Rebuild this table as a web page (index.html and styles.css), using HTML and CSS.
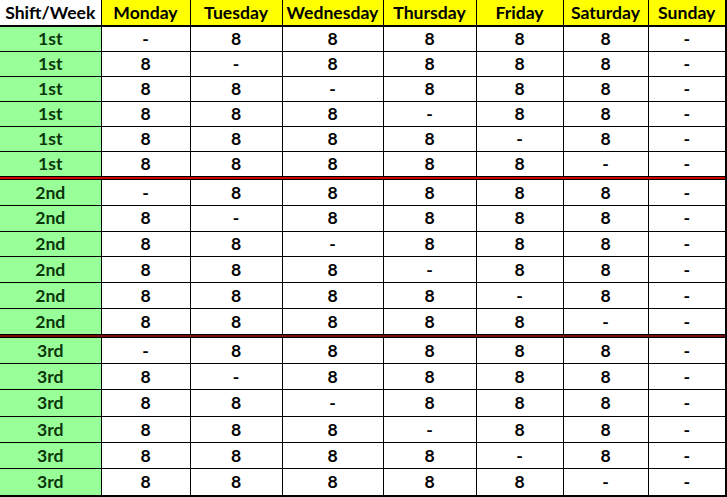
FILE: index.html
```html
<!DOCTYPE html>
<html>
<head>
<meta charset="utf-8">
<link rel="stylesheet" href="styles.css">
</head>
<body>
<table class="sched">
<colgroup>
<col class="c0"><col class="c1"><col class="c2"><col class="c3"><col class="c4"><col class="c5"><col class="c6"><col class="c7">
</colgroup>
<thead>
<tr class="head">
<th class="corner">Shift/Week</th><th>Monday</th><th>Tuesday</th><th>Wednesday</th><th>Thursday</th><th>Friday</th><th>Saturday</th><th>Sunday</th>
</tr>
</thead>
<tbody class="g1">
<tr><td class="lab">1st</td><td>-</td><td>8</td><td>8</td><td>8</td><td>8</td><td>8</td><td>-</td></tr>
<tr><td class="lab">1st</td><td>8</td><td>-</td><td>8</td><td>8</td><td>8</td><td>8</td><td>-</td></tr>
<tr><td class="lab">1st</td><td>8</td><td>8</td><td>-</td><td>8</td><td>8</td><td>8</td><td>-</td></tr>
<tr><td class="lab">1st</td><td>8</td><td>8</td><td>8</td><td>-</td><td>8</td><td>8</td><td>-</td></tr>
<tr><td class="lab">1st</td><td>8</td><td>8</td><td>8</td><td>8</td><td>-</td><td>8</td><td>-</td></tr>
<tr><td class="lab">1st</td><td>8</td><td>8</td><td>8</td><td>8</td><td>8</td><td>-</td><td>-</td></tr>
<tr class="sep red"><td colspan="8"></td></tr>
</tbody>
<tbody class="g2">
<tr><td class="lab">2nd</td><td>-</td><td>8</td><td>8</td><td>8</td><td>8</td><td>8</td><td>-</td></tr>
<tr><td class="lab">2nd</td><td>8</td><td>-</td><td>8</td><td>8</td><td>8</td><td>8</td><td>-</td></tr>
<tr><td class="lab">2nd</td><td>8</td><td>8</td><td>-</td><td>8</td><td>8</td><td>8</td><td>-</td></tr>
<tr><td class="lab">2nd</td><td>8</td><td>8</td><td>8</td><td>-</td><td>8</td><td>8</td><td>-</td></tr>
<tr><td class="lab">2nd</td><td>8</td><td>8</td><td>8</td><td>8</td><td>-</td><td>8</td><td>-</td></tr>
<tr><td class="lab">2nd</td><td>8</td><td>8</td><td>8</td><td>8</td><td>8</td><td>-</td><td>-</td></tr>
<tr class="sep maroon"><td colspan="8"></td></tr>
</tbody>
<tbody class="g3">
<tr><td class="lab">3rd</td><td>-</td><td>8</td><td>8</td><td>8</td><td>8</td><td>8</td><td>-</td></tr>
<tr><td class="lab">3rd</td><td>8</td><td>-</td><td>8</td><td>8</td><td>8</td><td>8</td><td>-</td></tr>
<tr><td class="lab">3rd</td><td>8</td><td>8</td><td>-</td><td>8</td><td>8</td><td>8</td><td>-</td></tr>
<tr><td class="lab">3rd</td><td>8</td><td>8</td><td>8</td><td>-</td><td>8</td><td>8</td><td>-</td></tr>
<tr><td class="lab">3rd</td><td>8</td><td>8</td><td>8</td><td>8</td><td>-</td><td>8</td><td>-</td></tr>
<tr><td class="lab">3rd</td><td>8</td><td>8</td><td>8</td><td>8</td><td>8</td><td>-</td><td>-</td></tr>
</tbody>
</table>
</body>
</html>
```
FILE: styles.css
```css
html, body {
  margin: 0;
  padding: 0;
  background: #ffffff;
}
.sched {
  border-collapse: collapse;
  table-layout: fixed;
  width: 726px;
  font-family: Lato, "Liberation Sans", sans-serif;
  font-weight: 700;
  font-size: 17.6px;
  color: #000;
}
.c0 { width: 101px; }
.c1 { width: 89px; }
.c2 { width: 92px; }
.c3 { width: 101px; }
.c4 { width: 93px; }
.c5 { width: 87px; }
.c6 { width: 85px; }
.c7 { width: 78px; }
.sched th, .sched td {
  padding: 0;
  text-align: center;
  vertical-align: middle;
  border: 1px solid #000;
  line-height: 1;
  overflow: hidden;
  white-space: nowrap;
}
.sched th {
  background: #ffff00;
  height: 25px;
  font-weight: 700;
  border-top: none;
  border-bottom: 2px solid #000;
}
.sched th.corner {
  background: #ffffff;
  border-left: none;
}
.sched tr > :first-child { border-left: none; }
.sched tr > :last-child { border-right: 2px solid #000; }
.sched td.lab {
  background: #99ff99;
  color: #0b360b;
}
.g1 td { height: 24px; }
.g2 td { height: 24.8px; }
.g3 td { height: 25.3px; }
.sched tbody.g3 tr:last-child td { border-bottom: 2px solid #000; }
.sched tr.sep td {
  height: 2px;
  padding: 0;
  border-top: 1px solid #000;
  border-bottom: 1px solid #000;
}
.sched tr.red td { background: #d00000; }
.sched tr.maroon td { background: #7a0b0b; }
```
